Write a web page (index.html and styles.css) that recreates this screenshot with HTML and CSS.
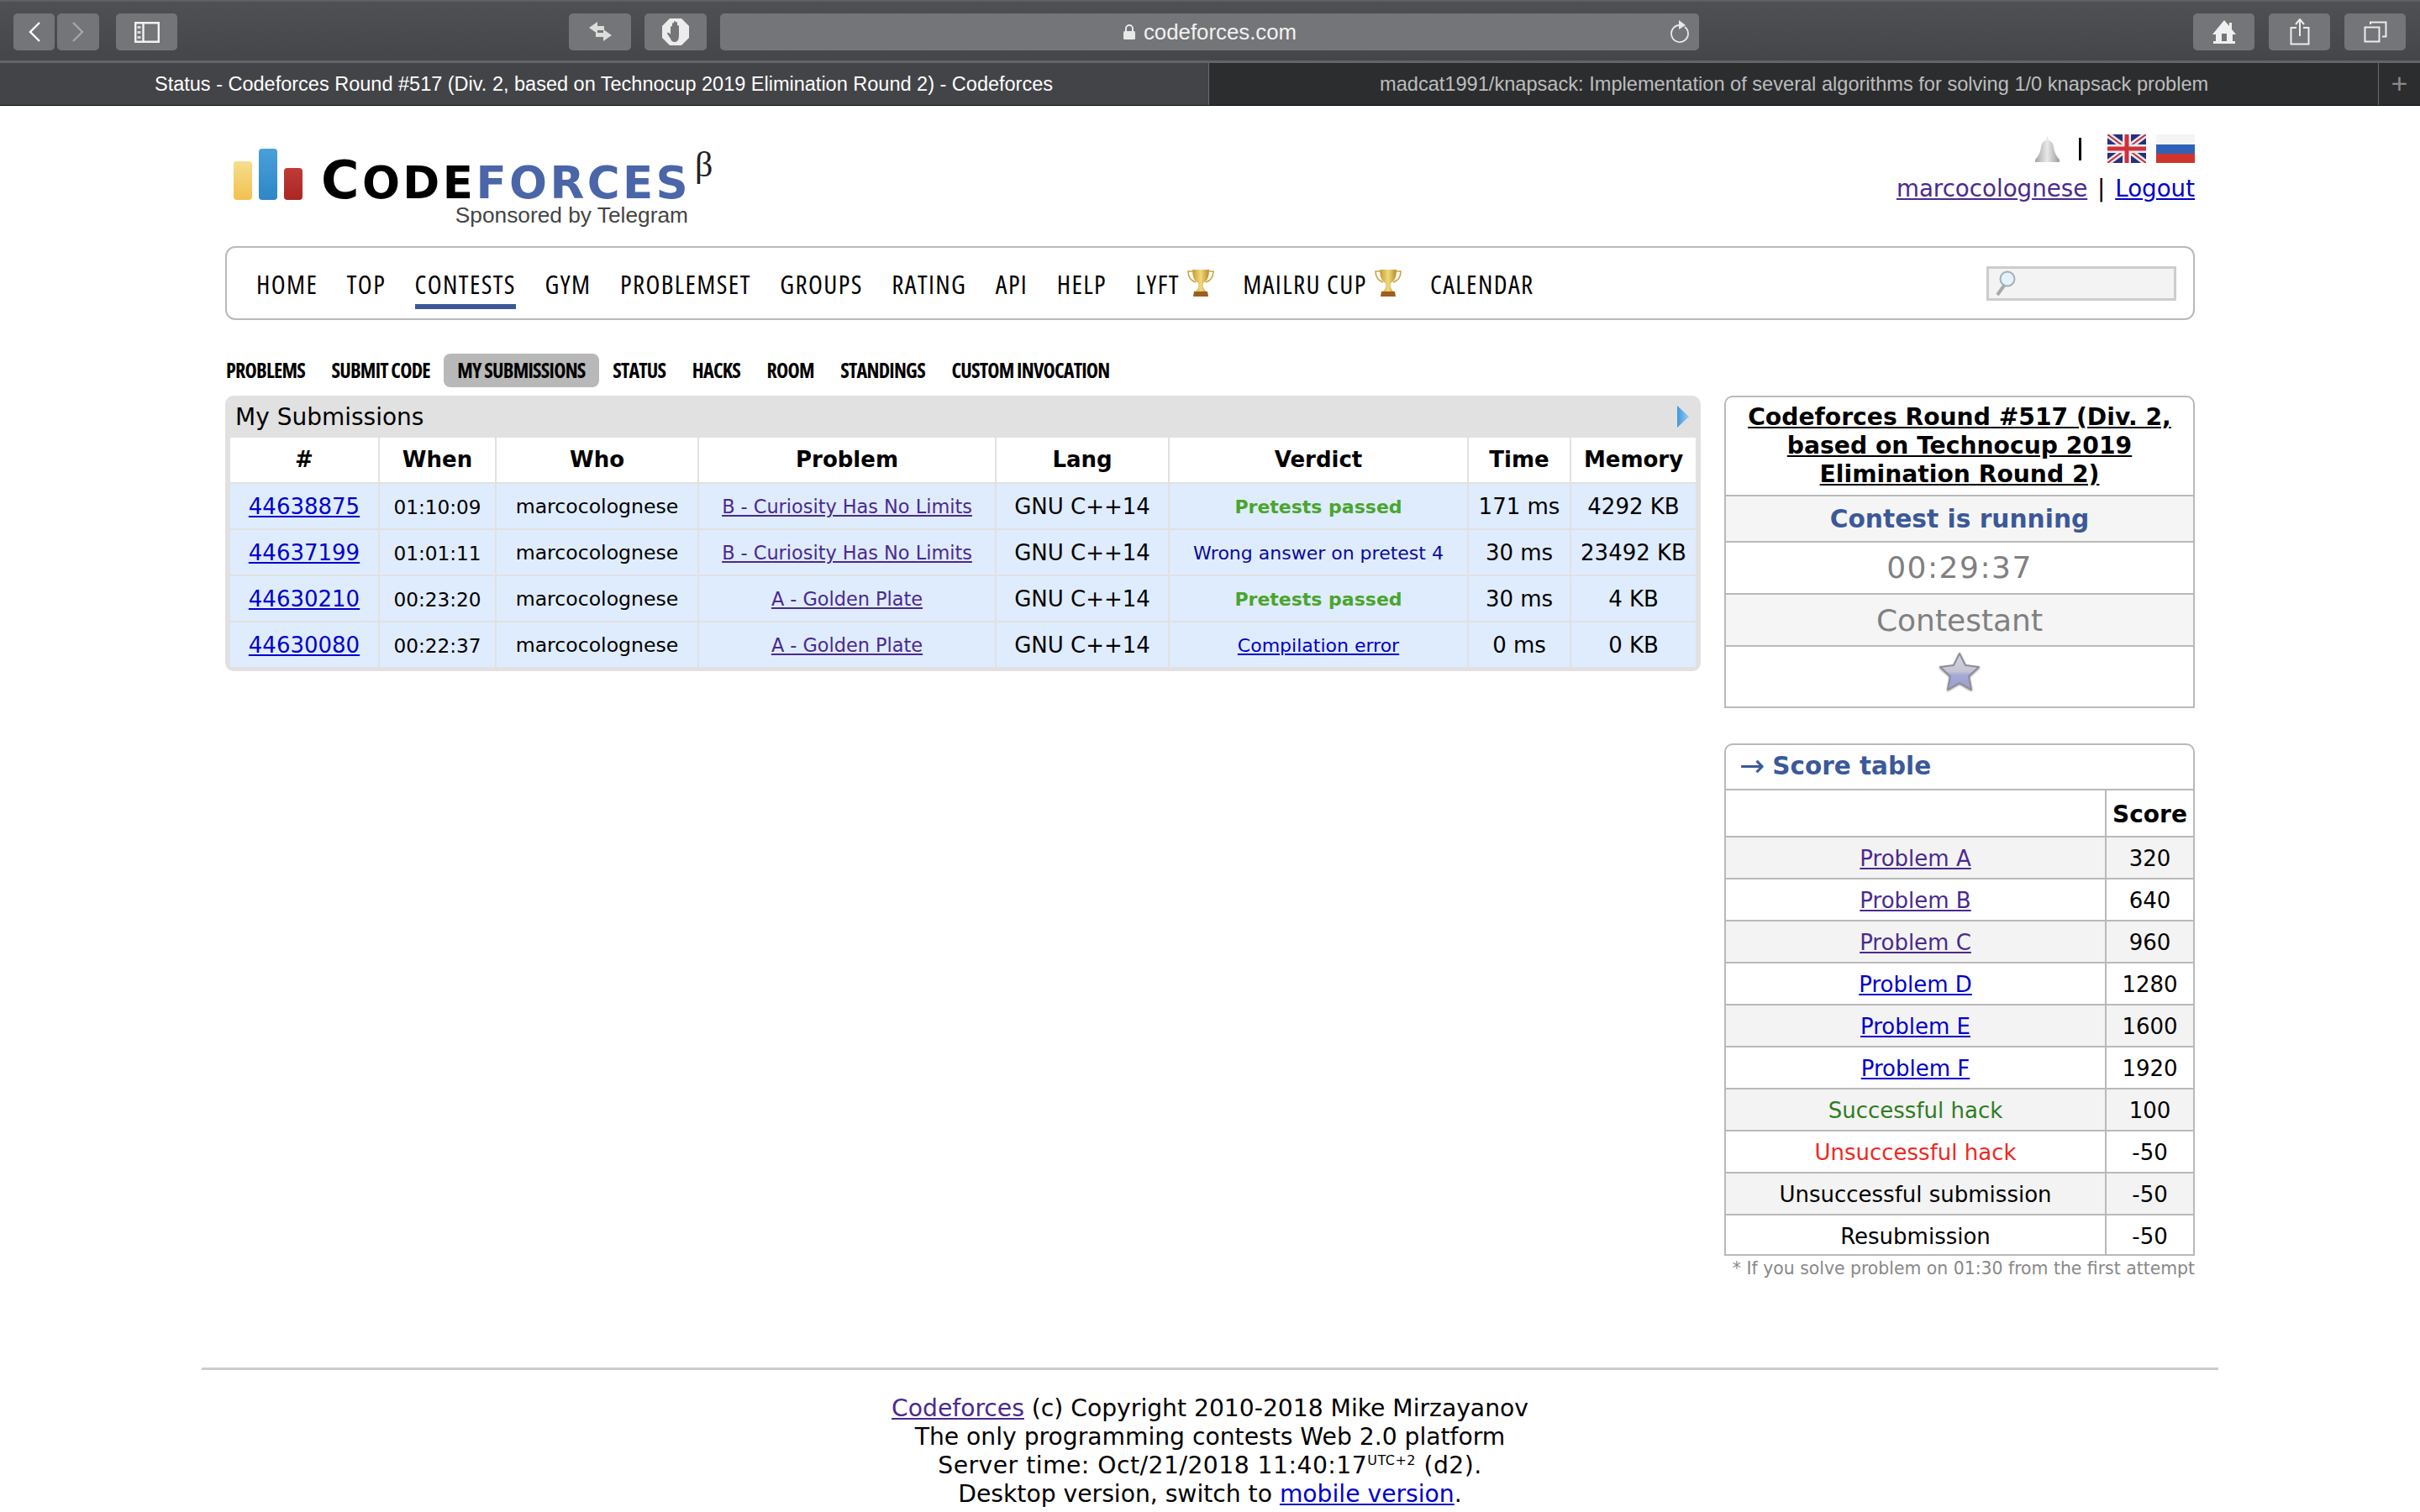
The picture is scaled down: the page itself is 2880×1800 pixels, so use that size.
FILE: index.html
```html
<!DOCTYPE html>
<html>
<head>
    <title>Status - Codeforces</title>
    <link rel="stylesheet" href="styles.css">
</head>
<body>
    <div class="toolbar">
        <div class="btn btn-back">
            <svg width="16" height="24" viewBox="0 0 16 24"><path d="M14 1 3 12l11 11" fill="none" stroke="#fff" stroke-width="2.4"/></svg>
        </div>
        <div class="btn btn-forward">
            <svg width="16" height="24" viewBox="0 0 16 24"><path d="M2 1l11 11L2 23" fill="none" stroke="#a5a6a8" stroke-width="2.4"/></svg>
        </div>
        <div class="btn btn-sidebar">
            <svg width="30" height="25" viewBox="0 0 30 25"><path d="M1.200 1.200h27.600v22.600H1.200zM10.500 1.200v22.600" fill="none" stroke="#f2f2f2" stroke-width="2.400"/><path d="M3.500 5h4v3h-4zM3.500 11h4v3h-4zM3.500 17h4v3h-4z" fill="#d8d8d8"/></svg>
        </div>
        <div class="btn btn-wide btn-swap">
            <svg width="28" height="24" viewBox="0 0 28 24"><path d="M11 0 1 7l10 7v-4h8V5h-8zM18 9v4H9v5h9v5l10-7z" fill="#dcdcdc"/></svg>
        </div>
        <div class="btn btn-wide btn-shield">
            <svg width="34" height="34" viewBox="0 0 34 34"><path d="M10 1h14l9 9v14l-9 9H10l-9-9V10z" fill="#ececec"/><path d="M11 15v-4q1-2 2 0v5-9q1-2 2 0v8-10q1-2 2 0v10-9q1-2 2 0v10-6q1-2 2 0v11q0 8-5 8-4 0-5-4l-4-6q0-2 2-1l2 2z" fill="#747578"/></svg>
        </div>
        <div class="url">
            <svg class="lock" width="16" height="20" viewBox="0 0 16 20"><path d="M4 9V6a4 4 0 0 1 8 0v3" fill="none" stroke="#e8e8e8" stroke-width="2"/><rect x="1" y="9" width="14" height="10" rx="1.500" fill="#e8e8e8"/></svg>
            <span>codeforces.com</span>
            <svg class="reload" width="26" height="28" viewBox="0 0 26 28"><path d="M19 9a10 10 0 1 1-6-2" fill="none" stroke="#e8e8e8" stroke-width="1.800"/><path d="M12 1l8 6-8 5z" fill="#e8e8e8"/></svg>
        </div>
        <div class="toolbar-right">
            <div class="btn btn-wide">
                <svg width="30" height="28" viewBox="0 0 30 28"><path d="M15 0 1 17h4v8h-3v3h26v-3h-3v-8h4l-5-6V3h-3v4z" fill="#f0f0f0"/><rect x="12" y="16" width="6" height="9" fill="#747578"/></svg>
            </div>
            <div class="btn btn-wide">
                <svg width="24" height="32" viewBox="0 0 24 32"><path d="M8 11H1.500v19.500h21V11H16M12 21V2M7 7l5-6 5 6" fill="none" stroke="#ececec" stroke-width="2"/></svg>
            </div>
            <div class="btn btn-wide">
                <svg width="28" height="26" viewBox="0 0 28 26"><path d="M1.500 7.500h17v17h-17zM8 4V1.500h18.500v17H22" fill="none" stroke="#ececec" stroke-width="2"/></svg>
            </div>
        </div>
    </div>
    <div class="tabs">
        <div class="tab tab-active">Status - Codeforces Round #517 (Div. 2, based on Technocup 2019 Elimination Round 2) - Codeforces</div>
        <div class="tab tab-other">madcat1991/knapsack: Implementation of several algorithms for solving 1/0 knapsack problem</div>
        <div class="tab-plus">+</div>
    </div>

    <div class="page">
        <div class="header">
            <div class="logo">
                <div class="logo-bars">
                    <i class="bar bar-y"></i>
                    <i class="bar bar-b"></i>
                    <i class="bar bar-r"></i>
                </div>
                <div class="logo-text">
                    <div class="logo-name"><span class="big">C</span>ODE<span class="blue">FORCES</span></div>
                    <div class="logo-sub">Sponsored by Telegram</div>
                </div>
                <div class="logo-beta">β</div>
            </div>
            <div class="lang-info">
                <div class="lang-row">
                    <svg class="bell" width="31" height="32" viewBox="0 0 31 32"><defs><linearGradient id="bellg" x1="0" x2="1"><stop offset="0" stop-color="#a6a6a6"/><stop offset=".5" stop-color="#e8e8e8"/><stop offset="1" stop-color="#9c9c9c"/></linearGradient></defs><path d="M15.500 0l1.500 6q5 1 6 8 1 9 7 15v3H1v-3q6-6 7-15 1-7 6-8z" fill="url(#bellg)"/></svg>
                    <i class="lang-sep"></i>
                    <svg width="46" height="34" viewBox="0 0 46 34"><rect width="46" height="34" fill="#26317a"/><path d="M0 0l46 34M46 0 0 34" stroke="#e8e8ee" stroke-width="7"/><path d="M0 0l46 34M46 0 0 34" stroke="#c8303a" stroke-width="2"/><path d="M23 0v34M0 17h46" stroke="#eee" stroke-width="10"/><path d="M23 0v34M0 17h46" stroke="#d0303a" stroke-width="5"/></svg>
                    <svg class="flag-ru" width="46" height="34" viewBox="0 0 46 34"><rect width="46" height="12" fill="#f4f4f6"/><rect y="12" width="46" height="11" fill="#2f62b5"/><rect y="23" width="46" height="11" fill="#d0352c"/></svg>
                </div>
                <div class="user-row"><a class="visited" href="#">marcocolognese</a> <span class="bar-sep">|</span> <a href="#">Logout</a></div>
            </div>
        </div>

        <div class="menu">
            <a class="menu-item">HOME</a>
            <a class="menu-item">TOP</a>
            <a class="menu-item menu-current">CONTESTS</a>
            <a class="menu-item">GYM</a>
            <a class="menu-item">PROBLEMSET</a>
            <a class="menu-item">GROUPS</a>
            <a class="menu-item">RATING</a>
            <a class="menu-item">API</a>
            <a class="menu-item">HELP</a>
            <a class="menu-item">LYFT<svg class="trophy" width="32" height="32" viewBox="0 0 32 32"><use href="#cup"/></svg></a>
            <a class="menu-item">MAILRU CUP<svg class="trophy" width="32" height="32" viewBox="0 0 32 32"><defs><linearGradient id="cupg" x1="0" x2="1"><stop offset="0" stop-color="#c79a2e"/><stop offset=".5" stop-color="#f1da7c"/><stop offset="1" stop-color="#b98a25"/></linearGradient><g id="cup"><path d="M6 2H1q0 10 9 13M26 2h5q0 10-9 13" fill="none" stroke="#c9a23e" stroke-width="1.500"/><path d="M6 0h20q0 13-7 16-1 4 1 7l2 3H10l2-3q2-3 1-7Q6 13 6 0z" fill="url(#cupg)"/><path d="M8 26h16l1 6H7z" fill="#9a5f22"/></g></defs><use href="#cup"/></svg></a>
            <a class="menu-item">CALENDAR</a>
            <div class="search">
                <svg width="24" height="32" viewBox="0 0 24 32"><path d="M10 19 2 30" stroke="#a9a9a9" stroke-width="4"/><circle cx="14" cy="11" r="8.500" fill="#e4f2fb" stroke="#9fb0b8" stroke-width="2"/></svg>
            </div>
        </div>

        <div class="submenu">
            <a>PROBLEMS</a>
            <a>SUBMIT CODE</a>
            <a class="submenu-current">MY SUBMISSIONS</a>
            <a>STATUS</a>
            <a>HACKS</a>
            <a>ROOM</a>
            <a>STANDINGS</a>
            <a>CUSTOM INVOCATION</a>
        </div>

        <div class="columns">
            <div class="main">
                <div class="datatable">
                    <div class="datatable-title">
                        <span>My Submissions</span>
                        <svg width="14" height="26" viewBox="0 0 14 26"><defs><linearGradient id="arrowg" x1="0" x2="1"><stop offset="0" stop-color="#3f97dc"/><stop offset="1" stop-color="#9ccbf0"/></linearGradient></defs><path d="M0 0l14 13L0 26z" fill="url(#arrowg)"/></svg>
                    </div>
                    <table class="status-table">
                        <colgroup>
                            <col class="c1"><col class="c2"><col class="c3"><col class="c4"><col class="c5"><col class="c6"><col class="c7"><col class="c8">
                        </colgroup>
                        <tr>
                            <th>#</th><th>When</th><th>Who</th><th>Problem</th><th>Lang</th><th>Verdict</th><th>Time</th><th>Memory</th>
                        </tr>
                        <tr>
                            <td><a class="sub-id" href="#">44638875</a></td>
                            <td class="when">01:10:09</td>
                            <td class="who">marcocolognese</td>
                            <td class="problem"><a class="visited" href="#">B - Curiosity Has No Limits</a></td>
                            <td>GNU C++14</td>
                            <td class="verdict ok">Pretests passed</td>
                            <td>171 ms</td>
                            <td>4292 KB</td>
                        </tr>
                        <tr>
                            <td><a class="sub-id" href="#">44637199</a></td>
                            <td class="when">01:01:11</td>
                            <td class="who">marcocolognese</td>
                            <td class="problem"><a class="visited" href="#">B - Curiosity Has No Limits</a></td>
                            <td>GNU C++14</td>
                            <td class="verdict wrong">Wrong answer on pretest 4</td>
                            <td>30 ms</td>
                            <td>23492 KB</td>
                        </tr>
                        <tr>
                            <td><a class="sub-id" href="#">44630210</a></td>
                            <td class="when">00:23:20</td>
                            <td class="who">marcocolognese</td>
                            <td class="problem"><a class="visited" href="#">A - Golden Plate</a></td>
                            <td>GNU C++14</td>
                            <td class="verdict ok">Pretests passed</td>
                            <td>30 ms</td>
                            <td>4 KB</td>
                        </tr>
                        <tr>
                            <td><a class="sub-id" href="#">44630080</a></td>
                            <td class="when">00:22:37</td>
                            <td class="who">marcocolognese</td>
                            <td class="problem"><a class="visited" href="#">A - Golden Plate</a></td>
                            <td>GNU C++14</td>
                            <td class="verdict"><a href="#">Compilation error</a></td>
                            <td>0 ms</td>
                            <td>0 KB</td>
                        </tr>
                    </table>
                </div>
            </div>

            <div class="sidebar">
                <div class="box contest-box">
                    <div class="contest-name"><a href="#">Codeforces Round #517 (Div. 2, based on Technocup 2019 Elimination Round 2)</a></div>
                    <div class="contest-state">Contest is running</div>
                    <div class="contest-big contest-timer">00:29:37</div>
                    <div class="contest-big contest-role">Contestant</div>
                    <div class="contest-star">
                        <svg class="star" width="50" height="46" viewBox="0 0 50 46"><defs><linearGradient id="starg" x1="0" y1="0" x2="0" y2="1"><stop offset="0" stop-color="#d6d6e0"/><stop offset=".5" stop-color="#c4c4d4"/><stop offset=".6" stop-color="#a6a8d6"/><stop offset="1" stop-color="#9c9ed0"/></linearGradient></defs><path d="M25 1l7 14 16 2-12 11 3 16-14-8-14 8 3-16L2 17l16-2z" fill="url(#starg)" stroke="#8e8e9e" stroke-width="2" stroke-linejoin="round"/></svg>
                    </div>
                </div>

                <div class="box score-box">
                    <div class="score-title"><span class="arrow">→</span>Score table</div>
                    <table class="score-table">
                        <tr><th></th><th>Score</th></tr>
                        <tr class="dark"><td><a class="visited" href="#">Problem A</a></td><td>320</td></tr>
                        <tr><td><a class="visited" href="#">Problem B</a></td><td>640</td></tr>
                        <tr class="dark"><td><a class="visited" href="#">Problem C</a></td><td>960</td></tr>
                        <tr><td><a href="#">Problem D</a></td><td>1280</td></tr>
                        <tr class="dark"><td><a href="#">Problem E</a></td><td>1600</td></tr>
                        <tr><td><a href="#">Problem F</a></td><td>1920</td></tr>
                        <tr class="dark"><td class="hack-ok">Successful hack</td><td>100</td></tr>
                        <tr><td class="hack-bad">Unsuccessful hack</td><td>-50</td></tr>
                        <tr class="dark"><td>Unsuccessful submission</td><td>-50</td></tr>
                        <tr><td>Resubmission</td><td>-50</td></tr>
                    </table>
                </div>
                <div class="score-note">* If you solve problem on 01:30 from the first attempt</div>
            </div>
        </div>
    </div>

    <div class="footer">
        <div><a class="visited" href="#">Codeforces</a> (c) Copyright 2010-2018 Mike Mirzayanov</div>
        <div>The only programming contests Web 2.0 platform</div>
        <div class="server-time">Server time: Oct/21/2018 11:40:17<sup>UTC+2</sup> (d2).</div>
        <div>Desktop version, switch to <a href="#">mobile version</a>.</div>
    </div>
</body>
</html>
```

FILE: styles.css
```css
html, body {
    margin: 0;
    height: 1800px;
    overflow: hidden;
    background: #fff;
}

body {
    font-family: "DejaVu Sans", Verdana, sans-serif;
    color: #000;
}

a {
    color: #0000cc;
}

a.visited {
    color: #4b2a8f;
}

/* browser chrome */
.toolbar {
    display: flex;
    align-items: center;
    box-sizing: border-box;
    height: 75px;
    padding: 2px 17px 0 16px;
    background: linear-gradient(#4f5053, #45464a);
    border-top: 2px solid #5f6063;
    border-bottom: 3px solid #636467;
}

.btn {
    display: flex;
    align-items: center;
    justify-content: center;
    width: 49px;
    height: 44px;
    background: #747578;
    border-radius: 5px;
}

.btn-forward {
    width: 50px;
    margin-left: 3px;
}

.btn-sidebar {
    width: 73px;
    margin-left: 20px;
}

.btn-wide {
    width: 73px;
}

.btn-swap {
    width: 74px;
    margin-left: 466px;
}

.btn-shield {
    width: 74px;
    margin-left: 16px;
}

.url {
    position: relative;
    display: flex;
    align-items: center;
    justify-content: center;
    box-sizing: border-box;
    width: 1165px;
    height: 44px;
    margin-left: 16px;
    background: #747578;
    border-radius: 5px;
    color: #f2f2f2;
    font: 25.800px "Liberation Sans", sans-serif;
}

.lock {
    margin-right: 9px;
}

.reload {
    position: absolute;
    right: 10px;
    top: 7px;
}

.toolbar-right {
    display: flex;
    gap: 17px;
    margin-left: auto;
}

.tabs {
    display: flex;
    height: 50px;
    border-bottom: 1px solid #0c0c0c;
    font: 23.500px "Liberation Sans", sans-serif;
    background: #2c2d2f;
}

.tab {
    display: flex;
    align-items: center;
    box-sizing: border-box;
    white-space: nowrap;
}

.tab-active {
    width: 1438px;
    padding-left: 184px;
    background: #434447;
    color: #fff;
}

.tab-other {
    width: 1393px;
    padding-left: 203px;
    border-left: 1px solid #6a6a6c;
    border-right: 1px solid #6a6a6c;
    color: #bdbdbd;
    font-size: 23.600px;
}

.tab-plus {
    flex: 1;
    text-align: center;
    color: #8a8a8c;
    font-size: 34px;
    line-height: 48px;
}

/* page */
.page {
    width: 2344px;
    margin-left: 268px;
}

.header {
    display: flex;
    justify-content: space-between;
    height: 167px;
}

.logo {
    display: flex;
    align-items: flex-start;
    padding: 51px 0 0 10px;
}

.logo-bars {
    display: flex;
    align-items: flex-end;
    gap: 8px;
    height: 61px;
}

.bar {
    display: block;
    width: 22px;
    border-radius: 4px;
}

.bar-y {
    height: 46px;
    background: linear-gradient(#f6dd8d, #f2c14e);
}

.bar-b {
    height: 61px;
    background: linear-gradient(#4aa0d8, #2f86c6);
}

.bar-r {
    height: 38px;
    background: linear-gradient(#c03a36, #a82824);
}

.logo-text {
    margin-left: 22px;
    width: 437px;
}

.logo-name {
    margin-top: 15px;
    font: bold 53px/46px "DejaVu Sans", sans-serif;
    white-space: nowrap;
    letter-spacing: 3.400px;
}

.logo-name .big {
    font-size: 62px;
}

.logo-name .blue {
    color: #4a66a8;
}

.logo-sub {
    text-align: right;
    color: #444;
    font: 26.300px/30px "Liberation Sans", sans-serif;
}

.logo-beta {
    margin: -4px 0 0 8px;
    font: 42px/46px "Liberation Serif", serif;
    color: #222;
}

.lang-info {
    display: flex;
    flex-direction: column;
    align-items: flex-end;
    padding-top: 34px;
}

.lang-row {
    display: flex;
    align-items: center;
    height: 34px;
}

.lang-sep {
    width: 3px;
    height: 27px;
    margin: 0 31px 0 22px;
    background: #000;
}

.flag-ru {
    margin-left: 12px;
}

.user-row {
    margin-top: 13px;
    font-size: 27.700px;
    line-height: 36px;
    white-space: nowrap;
}

.bar-sep {
    margin: 0 3px;
}

.menu {
    display: flex;
    align-items: center;
    gap: 34.500px;
    box-sizing: border-box;
    height: 88px;
    padding: 2px 20px 0 35px;
    border: 2px solid #b9b9b9;
    border-radius: 12px;
}

.menu-item,
.submenu a {
    font-family: "Open Sans", sans-serif;
    font-stretch: 75%;
    white-space: nowrap;
    color: #000;
}

.menu-item {
    display: flex;
    align-items: center;
    position: relative;
    font-size: 31px;
    letter-spacing: 1.400px;
}

.menu-current::after {
    content: "";
    position: absolute;
    left: 0;
    right: 0;
    bottom: -9px;
    height: 6px;
    background: #3b5998;
}

.trophy {
    margin-left: 9px;
    margin-top: -2px;
}

.search {
    display: flex;
    align-items: center;
    box-sizing: border-box;
    width: 226px;
    height: 41px;
    margin: -2px 0 0 auto;
    padding-left: 8px;
    border: 3px solid #ccc;
    background: #f3f3f3;
}

.submenu {
    display: flex;
    align-items: center;
    height: 40px;
    margin-top: 40px;
    padding-left: 1px;
    gap: 31.500px;
}

.submenu a {
    font-size: 24px;
    font-weight: bold;
    letter-spacing: -.75px;
    line-height: 40px;
}

.submenu a.submenu-current {
    padding: 0 16px;
    margin: 0 -15px;
    border-radius: 8px;
    background: #b8b8b8;
}

.columns {
    display: flex;
    justify-content: space-between;
    margin-top: 10px;
}

.main {
    width: 1756px;
}

.datatable {
    box-sizing: border-box;
    height: 328px;
    padding: 0 6px;
    background: #e1e1e1;
    border-radius: 10px;
}

.datatable-title {
    display: flex;
    align-items: center;
    justify-content: space-between;
    height: 50px;
    padding: 0 8px 0 6px;
    font-size: 28px;
}

.status-table {
    width: 1744px;
    table-layout: fixed;
    border-collapse: collapse;
    background: #fff;
}

.c1 { width: 177px; }
.c2 { width: 139px; }
.c3 { width: 241px; }
.c4 { width: 354px; }
.c5 { width: 206px; }
.c6 { width: 356px; }
.c7 { width: 122px; }
.c8 { width: 149px; }

.status-table th,
.status-table td {
    height: 52px;
    padding: 1px 0 0;
    border: 2px solid #e1e1e1;
    text-align: center;
    white-space: nowrap;
    font-size: 26px;
}

.status-table th {
    height: 51px;
    padding: 0 0 2px;
}

.status-table tr:first-child th {
    border-top: 0;
}

.status-table tr:last-child td {
    border-bottom: 0;
}

.status-table th:first-child,
.status-table td:first-child {
    border-left: 0;
}

.status-table th:last-child,
.status-table td:last-child {
    border-right: 0;
}

.status-table td {
    background: #dfecfd;
}

.status-table .when {
    font-size: 23.200px;
}

.status-table .who {
    font-size: 23.600px;
}

.status-table .problem {
    font-size: 22.400px;
}

.status-table .verdict {
    font-size: 22px;
}

.ok {
    color: #4aa52d;
    font-weight: bold;
}

.wrong {
    color: #0a0a9e;
}

.sidebar {
    width: 560px;
}

.box {
    box-sizing: border-box;
    border: 2px solid #b9b9b9;
    border-radius: 10px 10px 0 0;
    overflow: hidden;
}

.contest-box {
    height: 372px;
    text-align: center;
}

.contest-name {
    height: 116px;
    padding-top: 7px;
    box-sizing: border-box;
    font-size: 28.200px;
    font-weight: bold;
    line-height: 34px;
    white-space: nowrap;
}

.contest-name a {
    color: #000;
    display: block;
    white-space: normal;
    margin: 0 -4px;
}

.contest-state {
    height: 53px;
    border-top: 2px solid #b9b9b9;
    background: #f5f5f5;
    color: #3b5998;
    font-size: 29.700px;
    font-weight: bold;
    line-height: 53px;
}

.contest-big {
    height: 60px;
    border-top: 2px solid #b9b9b9;
    color: #808080;
    font-size: 36px;
    line-height: 60px;
}

.contest-timer {
    letter-spacing: 1.500px;
}

.contest-role {
    background: #f5f5f5;
    line-height: 62px;
}

.contest-star {
    padding-top: 7px;
    border-top: 2px solid #b9b9b9;
}

.star {
    filter: drop-shadow(0 1px 1px #8a8a8a);
}

.score-box {
    height: 610px;
    margin-top: 42px;
}

.score-title {
    height: 52px;
    padding-left: 16px;
    box-sizing: border-box;
    color: #3b5998;
    font-size: 29.500px;
    font-weight: bold;
    line-height: 50px;
}

.arrow {
    margin-right: 9px;
    font-size: 36px;
    font-weight: normal;
    line-height: 0;
    vertical-align: -2px;
}

.score-table {
    width: 100%;
    table-layout: fixed;
    border-collapse: collapse;
}

.score-table th,
.score-table td {
    height: 46px;
    padding: 2px 0 0;
    border: 2px solid #b9b9b9;
    text-align: center;
    font-size: 26px;
    white-space: nowrap;
}

.score-table th {
    height: 52px;
    font-size: 28px;
}

.score-table th:first-child,
.score-table td:first-child {
    width: 451px;
    border-left: 0;
}

.score-table th:last-child,
.score-table td:last-child {
    border-right: 0;
}

.score-table tr:last-child td {
    border-bottom: 0;
}

.dark td {
    background: #f3f3f3;
}

.hack-ok {
    color: #2f7d1f;
}

.hack-bad {
    color: #f0281e;
}

.score-note {
    margin-top: 2px;
    text-align: right;
    color: #888;
    font-size: 20.400px;
    line-height: 26px;
    white-space: nowrap;
}

/* footer */
.footer {
    width: 2400px;
    box-sizing: border-box;
    margin: 105px 0 0 240px;
    padding-top: 29px;
    border-top: 3px solid #ccc;
    text-align: center;
    font-size: 28.200px;
    line-height: 34px;
}

.server-time {
    letter-spacing: .5px;
}

.footer sup {
    font-size: 16px;
    line-height: 0;
}
```
